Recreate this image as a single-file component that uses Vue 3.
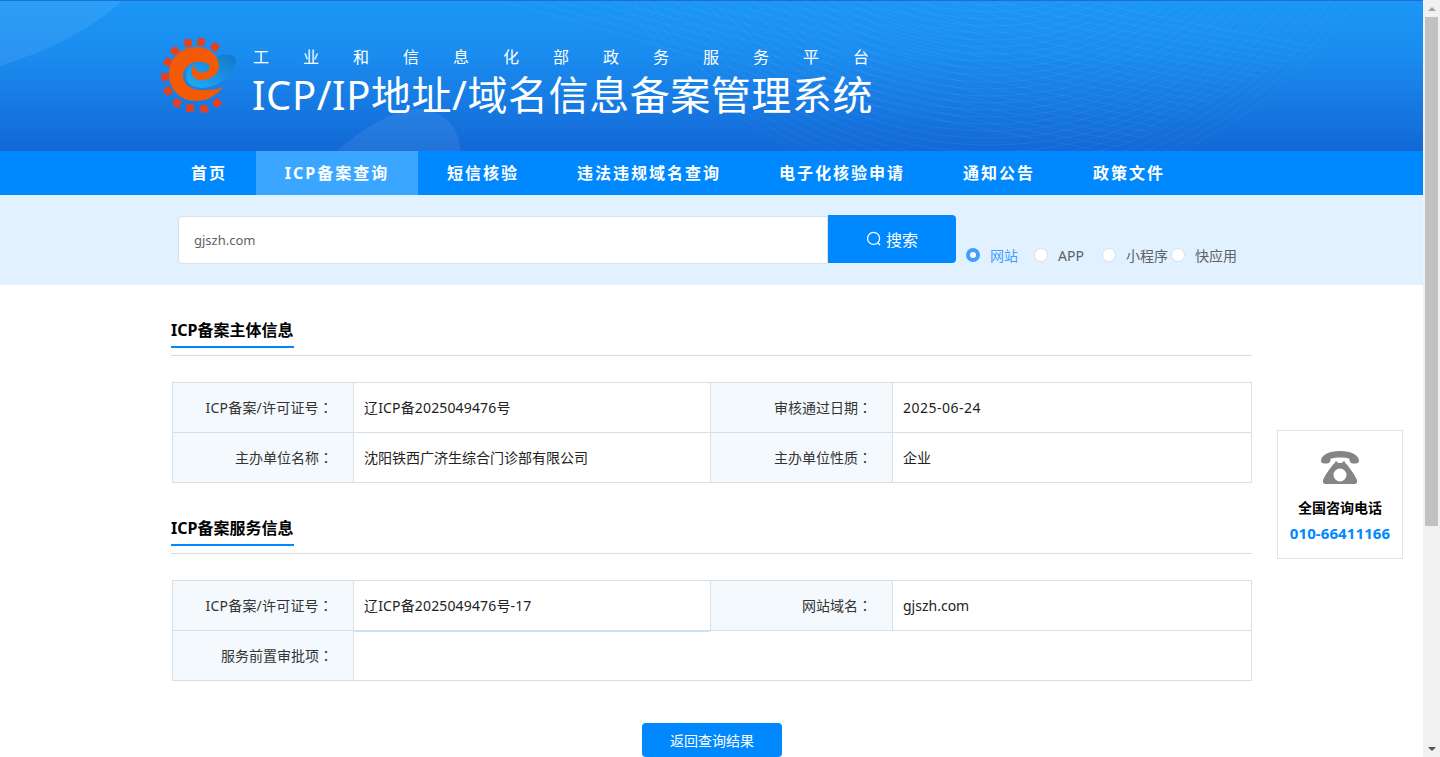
<script setup>
const nav = ['首页', 'ICP备案查询', '短信核验', '违法违规域名查询', '电子化核验申请', '通知公告', '政策文件']
const radios = [
  { label: '网站', active: true },
  { label: 'APP' },
  { label: '小程序' },
  { label: '快应用' }
]
const teeth = [
  [27, 6], [40, 5], [54, 10], [14, 14], [7, 25], [4, 40], [7, 54], [16, 66], [29, 71], [43, 72], [56, 66]
].map(([x, y]) => ({ x, y, a: (Math.atan2(y - 38, x - 30) * 180) / Math.PI }))
const arcs = Array.from({ length: 40 }, (_, i) => 170 + i * 7)
const waves = Array.from({ length: 22 }, (_, i) => i * 5)
</script>

<template>
  <div class="shell">
    <div class="page">
      <header class="banner">
        <svg class="art" viewBox="0 0 1423 150" aria-hidden="true">
          <path d="M0 0H122C92 28 48 50 0 65Z" fill="#fff" opacity=".08" />
          <path d="M337 150C365 125 395 108 420 108C445 110 460 128 460 150Z" fill="#fff" opacity=".07" />
          <g fill="none" stroke="#fff" stroke-opacity=".05">
            <circle v-for="r in arcs" :key="r" cx="990" cy="-250" :r="r" />
          </g>
          <g fill="none" stroke="#fff" stroke-opacity=".05">
            <path v-for="w in waves" :key="w" :transform="`translate(${w * 2} ${-w})`"
              d="M500 0C620 30 760 80 900 110C980 128 1060 142 1110 151" />
          </g>
        </svg>
        <div class="brand">
          <svg class="logo" viewBox="0 0 76 76" aria-hidden="true">
            <defs>
              <linearGradient id="sw" x1="1" y1="0" x2="0" y2="1">
                <stop offset="0" stop-color="#1577c8" />
                <stop offset=".55" stop-color="#1a93e6" />
                <stop offset="1" stop-color="#23b0f2" />
              </linearGradient>
            </defs>
            <rect v-for="t in teeth" :key="t.x + '-' + t.y" :x="t.x - 3.75" :y="t.y - 3.75" width="7.500" height="7.500"
              fill="#e8401c" :transform="`rotate(${t.a} ${t.x} ${t.y})`" />
            <path d="M60 18C67 17 75 18 75 23C75 30 68 41 57 47C47 52 33 53 27 45C24 40 25 33 29 28L40 24L57 19Z" fill="url(#sw)" />
            <path d="M62 50C54 60 45 64 35 64C19 64 8 52 8 37C8 22 20 10 35 10C48 10 58 18 58 29C58 38 50 42 42 43C36 43.500 32 41 31 37C30 33 31 30 33 28C34 33 38 37 44 35C49 33 50 29 47 27C41 24 33 24 28 28C24 31 22 34 22 38C22 46 29 53 39 53C46 53 56 53 62 50Z" fill="#f25a05" />
          </svg>
          <div class="brand-text">
            <div class="sub">工业和信息化部政务服务平台</div>
            <div class="title">ICP/IP地址/域名信息备案管理系统</div>
          </div>
        </div>
      </header>

      <nav class="nav">
        <a v-for="(n, i) in nav" :key="n" class="nav-item" :class="{ on: i === 1 }">{{ n }}</a>
      </nav>

      <section class="search">
        <div class="input">gjszh.com</div>
        <button class="go">
          <svg class="lens" viewBox="0 0 16 16" aria-hidden="true">
            <circle cx="7.600" cy="7.400" r="6" fill="none" stroke="#fff" stroke-width="1.300" />
            <path d="M11.800 11.800L14 14" stroke="#fff" stroke-width="1.300" fill="none" />
          </svg>
          <span>搜索</span>
        </button>
        <div class="radios">
          <label v-for="r in radios" :key="r.label" class="radio" :class="{ on: r.active }">
            <i class="dot"></i><span>{{ r.label }}</span>
          </label>
        </div>
      </section>

      <main class="content">
        <h2 class="head"><span>ICP备案主体信息</span></h2>
        <div class="tbl">
          <div class="row">
            <div class="k c1 lic-k">ICP备案/许可证号<span class="colon">：</span></div>
            <div class="v c2 lic">辽ICP备2025049476号</div>
            <div class="k c3">审核通过日期<span class="colon">：</span></div>
            <div class="v c4 date">2025-06-24</div>
          </div>
          <div class="row">
            <div class="k c1">主办单位名称<span class="colon">：</span></div>
            <div class="v c2">沈阳铁西广济生综合门诊部有限公司</div>
            <div class="k c3">主办单位性质<span class="colon">：</span></div>
            <div class="v c4">企业</div>
          </div>
        </div>

        <h2 class="head"><span>ICP备案服务信息</span></h2>
        <div class="tbl">
          <div class="row">
            <div class="k c1 lic-k">ICP备案/许可证号<span class="colon">：</span></div>
            <div class="v c2 lic raised">辽ICP备2025049476号-17</div>
            <div class="k c3">网站域名<span class="colon">：</span></div>
            <div class="v c4">gjszh.com</div>
          </div>
          <div class="row">
            <div class="k c1">服务前置审批项<span class="colon">：</span></div>
            <div class="v wide"></div>
          </div>
        </div>

        <div class="back-wrap"><button class="back">返回查询结果</button></div>
      </main>

      <aside class="hotline">
        <svg class="phone" viewBox="0 0 40 34" aria-hidden="true">
          <path d="M1 10C1 4 9 0 20 0S39 4 39 10C39 12 37 12.500 34 12.500C31 12.500 29.500 11.500 29.500 8C27 6 13 6 10.500 8C10.500 11.500 9 12.500 6 12.500C3 12.500 1 12 1 10Z" fill="#858585" />
          <path fill-rule="evenodd" d="M15 10.500H17.500V12H22.500V10.500H25V12C28 14 35 24 37 29V31C37 32 36 33 35 33H5C4 33 3 32 3 31V29C5 24 12 14 15 12ZM20 17.500A6.500 6.500 0 1 0 20 30.500A6.500 6.500 0 1 0 20 17.500Z" fill="#858585" />
        </svg>
        <div class="hl-label">全国咨询电话</div>
        <div class="hl-num">010-66411166</div>
      </aside>
    </div>

    <div class="bar" aria-hidden="true">
      <i class="arrow up"></i>
      <i class="thumb"></i>
      <i class="arrow down"></i>
    </div>
  </div>
</template>

<style>
html, body { margin: 0; height: 100%; overflow: hidden; }
</style>

<style scoped>
.shell {
  display: flex;
  width: 1440px;
  height: 757px;
  overflow: hidden;
  font-family: "Noto Sans", "Noto Sans CJK SC", sans-serif;
  color: #333;
}
.page {
  position: relative;
  width: 1423px;
  height: 757px;
  overflow: hidden;
  background: #fff;
}
.banner {
  position: relative;
  height: 151px;
  box-sizing: border-box;
  border-top: 1px solid #1a6ede;
  background: linear-gradient(180deg, #1b97f6 0%, #1a8cf0 35%, #1368d6 100%);
}
.art { position: absolute; inset: 0; width: 100%; height: 100%; }
.brand {
  position: relative;
  display: flex;
  padding: 36px 0 0 161px;
}
.logo { width: 76px; height: 76px; flex: none; }
.brand-text { margin-left: 15px; margin-top: 9px; color: #fff; }
.sub {
  font-size: 16px;
  line-height: 22px;
  letter-spacing: 34px;
  white-space: nowrap;
  padding-left: 1px;
}
.title {
  font-size: 40px;
  line-height: 50px;
  letter-spacing: .55px;
  white-space: nowrap;
  margin-top: 2px;
}
.nav {
  display: flex;
  height: 44px;
  padding-left: 162px;
  background: #0088ff;
}
.nav-item {
  padding: 0 29px;
  line-height: 44px;
  font-size: 16px;
  font-weight: 700;
  letter-spacing: 2px;
  color: #fff;
  white-space: nowrap;
}
.nav-item.on {
  box-sizing: border-box;
  width: 162px;
  padding: 0;
  text-align: center;
  background: #3ba6ff;
}
.search {
  display: flex;
  align-items: flex-start;
  height: 90px;
  box-sizing: border-box;
  padding: 20px 0 0 178px;
  background: #e2f1ff;
}
.input {
  width: 650px;
  height: 48px;
  margin-top: 1px;
  box-sizing: border-box;
  padding-left: 15px;
  border: 1px solid #dcdfe6;
  border-radius: 4px 0 0 4px;
  background: #fff;
  font-size: 13px;
  line-height: 46px;
  color: #606266;
}
.go {
  display: flex;
  align-items: center;
  justify-content: center;
  gap: 4px;
  width: 128px;
  height: 48px;
  padding: 0;
  border: 0;
  border-radius: 0 4px 4px 0;
  background: #0088ff;
  color: #fff;
  font: inherit;
  font-size: 16px;
}
.lens { width: 16px; height: 16px; }
.radios { display: flex; margin: 32px 0 0 10px; }
.radio {
  display: flex;
  align-items: center;
  flex: none;
  width: 68px;
  height: 16px;
  font-size: 14px;
  white-space: nowrap;
  color: #606266;
}
.radio:nth-child(3) { width: 69px; }
.radio .dot {
  flex: none;
  box-sizing: border-box;
  width: 14px;
  height: 14px;
  margin-right: 10px;
  border: 1px solid #dcdfe6;
  border-radius: 50%;
  background: #fff;
}
.radio.on { color: #409eff; }
.radio.on .dot { border: 4.500px solid #409eff; }
.content { padding: 0 171px; }
.head {
  margin: 33px 0 26px;
  height: 37px;
  border-bottom: 1px solid #d5dde6;
  font-size: 16px;
  font-weight: 700;
  color: #000;
}
.head span {
  display: inline-block;
  box-sizing: border-box;
  height: 30px;
  width: 123px;
  line-height: 24px;
  border-bottom: 2px solid #0088ff;
  white-space: nowrap;
}
.tbl {
  width: 1080px;
  margin-left: 1px;
  border: 1px solid #d8dfe6;
  border-bottom: 0;
  box-sizing: border-box;
}
.row {
  display: flex;
  height: 49px;
  border-bottom: 1px solid #d3e0ee;
  box-sizing: content-box;
}
.row:last-child { border-bottom-color: #d8dfe6; }
.k, .v {
  box-sizing: border-box;
  line-height: 49px;
  font-size: 14px;
  white-space: nowrap;
}
.k {
  background: #f4f9fd;
  text-align: right;
  padding-right: 20px;
  color: #333;
}
.lic-k { letter-spacing: .2px; }
.colon { font-family: "Noto Sans CJK TC", sans-serif; }
.v { padding-left: 10px; color: #222; border-left: 1px solid #d8dfe6; }
.lic { letter-spacing: .15px; }
.date { letter-spacing: .5px; }
.c1 { width: 180px; }
.c2 { width: 357px; }
.c3 { width: 182px; border-left: 1px solid #d8dfe6; }
.c4 { flex: 1; }
.wide { flex: 1; }
.raised {
  position: relative;
  height: 51px;
  background: #fff;
  border-bottom: 2px solid #cfe0ef;
  z-index: 1;
}
.back-wrap { display: flex; justify-content: center; margin-top: 42px; padding-left: 1px; }
.back {
  width: 140px;
  height: 34px;
  padding: 0;
  border: 0;
  border-radius: 4px;
  background: #0088ff;
  color: #fff;
  font: inherit;
  font-size: 14px;
}
.hotline {
  position: absolute;
  left: 1277px;
  top: 430px;
  width: 126px;
  height: 129px;
  box-sizing: border-box;
  border: 1px solid #e0e3ea;
  background: #fff;
  text-align: center;
}
.phone { display: block; width: 40px; height: 34px; margin: 20px auto 0; }
.hl-label { margin-top: 13px; font-size: 14px; line-height: 20px; font-weight: 700; color: #000; }
.hl-num { margin-top: 5px; font-size: 15px; line-height: 20px; font-weight: 700; letter-spacing: .1px; color: #0088ff; }
.bar {
  position: relative;
  width: 17px;
  height: 757px;
  background: #f1f1f1;
}
.thumb {
  position: absolute;
  left: 2px;
  top: 17px;
  width: 13px;
  height: 509px;
  background: #c1c1c1;
}
.arrow {
  position: absolute;
  left: 5px;
  width: 0;
  height: 0;
  border-left: 4px solid transparent;
  border-right: 4px solid transparent;
}
.arrow.up { top: 7px; border-bottom: 4px solid #a3a3a3; }
.arrow.down { bottom: 6px; border-top: 4px solid #505050; }
</style>
